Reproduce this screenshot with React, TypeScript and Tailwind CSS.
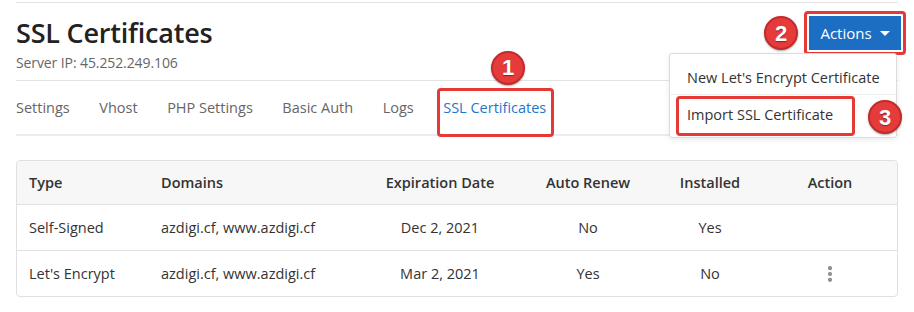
import { EllipsisVertical } from "lucide-react"

const rows = [
  { type: "Self-Signed", domains: "azdigi.cf, www.azdigi.cf", exp: "Dec 2, 2021", renew: "No", installed: "Yes", menu: false },
  { type: "Let's Encrypt", domains: "azdigi.cf, www.azdigi.cf", exp: "Mar 2, 2021", renew: "Yes", installed: "No", menu: true },
]

const tabs = ["Settings", "Vhost", "PHP Settings", "Basic Auth", "Logs"]

function Marker({ n }: { n: number }) {
  return (
    <div className="w-[34px] h-[34px] rounded-full bg-[#e63b3b] border-2 border-[#c42a2a] shadow-[0_1px_2px_rgba(0,0,0,0.35)] flex items-center justify-center text-white text-[22px] font-bold font-['Liberation_Sans',Arial,sans-serif] [text-shadow:0_1px_1px_rgba(0,0,0,0.4)]">
      {n}
    </div>
  )
}

export default function App() {
  return (
    <div className="w-[914px] h-[312px] bg-white overflow-hidden font-['Open_Sans','Noto_Sans',sans-serif] text-[#212529]">
      <div className="pl-4 pr-4">
        <div className="mt-[2px] h-px bg-[#e3e3e3]" />

        {/* Header */}
        <div className="h-[78px] flex justify-between items-start border-b border-[#e3e3e3]">
          <div className="pt-[14px]">
            <h1 className="text-[27px] leading-[32px] font-semibold text-[#222] tracking-[-0.2px]">SSL Certificates</h1>
            <p className="mt-[4px] text-[14px] leading-5 text-[#666] tracking-[-0.1px]">Server IP: 45.252.249.106</p>
          </div>

          <div className="relative -mr-[8px] mt-[8px] flex items-center gap-[6px]">
            <Marker n={2} />
            <div className="border-[3px] border-[#e53935] rounded-[4px] p-[2px]">
              <button className="w-[92px] h-[34px] bg-[#1b6ec2] text-white text-[15px] flex items-center justify-center gap-[8px]">
                Actions
                <span className="w-0 h-0 border-l-[5px] border-r-[5px] border-t-[5px] border-l-transparent border-r-transparent border-t-white" />
              </button>
            </div>

            {/* Dropdown menu */}
            <div className="absolute right-[9px] top-[42px] w-[228px] pt-[7px] pb-[2px] bg-white border border-[#dcdcdc] rounded-[3px] shadow-[0_2px_6px_rgba(0,0,0,0.08)] z-10">
              <div className="h-[34px] flex items-center pl-[17px] text-[14.5px] text-[#333] border-b border-[#eee]">
                New Let's Encrypt Certificate
              </div>
              <div className="relative h-[40px] flex items-center pl-[17px] text-[14.5px] text-[#333]">
                Import SSL Certificate
                <div className="absolute left-[6px] top-[1px] w-[179px] h-[40px] border-[3px] border-[#e53935] rounded-[4px]" />
                <div className="absolute right-[-6px] top-[5px]">
                  <Marker n={3} />
                </div>
              </div>
            </div>
          </div>
        </div>

        {/* Tabs */}
        <div className="h-[55px] flex items-center gap-[29.5px] border-b-2 border-[#ececec] text-[14.5px] text-[#666]">
          {tabs.map((t) => (
            <span key={t}>{t}</span>
          ))}
          <span className="relative text-[#1f77c9]">
            SSL Certificates
            <div className="absolute -left-[6px] -right-[8px] -top-[9px] h-[49px] border-[3px] border-[#e53935] rounded-[4px]" />
            <div className="absolute left-[48px] -top-[46px]">
              <Marker n={1} />
            </div>
          </span>
        </div>

        {/* Table */}
        <div className="mt-[24px] border border-[#e0e0e0] rounded-[4px] text-[14.5px] text-[#333]">
          <div className="grid grid-cols-[132px_222px_138px_158px_86px_1fr] h-[44px] items-center bg-[#f7f7f7] font-semibold text-[#333] border-b border-[#e0e0e0] rounded-t-[4px]">
            <div className="pl-[12px]">Type</div>
            <div className="pl-[12px]">Domains</div>
            <div className="text-center">Expiration Date</div>
            <div className="text-center">Auto Renew</div>
            <div className="text-center">Installed</div>
            <div className="text-center pl-[10px]">Action</div>
          </div>
          {rows.map((r, i) => (
            <div
              key={r.type}
              className={`grid grid-cols-[132px_222px_138px_158px_86px_1fr] items-center ${i === 0 ? "h-[46px] border-b border-[#e0e0e0]" : "h-[45px]"}`}
            >
              <div className="pl-[12px]">{r.type}</div>
              <div className="pl-[12px]">{r.domains}</div>
              <div className="text-center">{r.exp}</div>
              <div className="text-center">{r.renew}</div>
              <div className="text-center">{r.installed}</div>
              <div className="flex justify-center pl-[10px]">
                {r.menu && <EllipsisVertical size={20} strokeWidth={3} className="text-[#888]" />}
              </div>
            </div>
          ))}
        </div>
      </div>
    </div>
  )
}
